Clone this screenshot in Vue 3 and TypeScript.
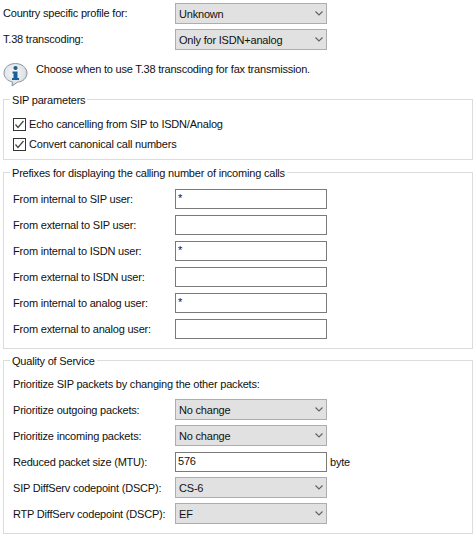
<script setup lang="ts">
interface Row {
  label: string,
  kind: 'select' | 'input',
  value: string,
  unit?: string
}

const topRows: Row[] = [
  { label: 'Country specific profile for:', kind: 'select', value: 'Unknown' },
  { label: 'T.38 transcoding:', kind: 'select', value: 'Only for ISDN+analog' }
]

const prefixRows: Row[] = [
  { label: 'From internal to SIP user:', kind: 'input', value: '*' },
  { label: 'From external to SIP user:', kind: 'input', value: '' },
  { label: 'From internal to ISDN user:', kind: 'input', value: '*' },
  { label: 'From external to ISDN user:', kind: 'input', value: '' },
  { label: 'From internal to analog user:', kind: 'input', value: '*' },
  { label: 'From external to analog user:', kind: 'input', value: '' }
]

const qosRows: Row[] = [
  { label: 'Prioritize outgoing packets:', kind: 'select', value: 'No change' },
  { label: 'Prioritize incoming packets:', kind: 'select', value: 'No change' },
  { label: 'Reduced packet size (MTU):', kind: 'input', value: '576', unit: 'byte' },
  { label: 'SIP DiffServ codepoint (DSCP):', kind: 'select', value: 'CS-6' },
  { label: 'RTP DiffServ codepoint (DSCP):', kind: 'select', value: 'EF' }
]

const checks = ['Echo cancelling from SIP to ISDN/Analog', 'Convert canonical call numbers']
const groups = [
  { title: 'Prefixes for displaying the calling number of incoming calls', rows: prefixRows, intro: '' },
  { title: 'Quality of Service', rows: qosRows, intro: 'Prioritize SIP packets by changing the other packets:' }
]
</script>

<template>
  <div class="page">
    <div class="top">
      <div v-for="row in topRows" :key="row.label" class="row top-row">
        <span class="label">{{ row.label }}</span>
        <div class="select">
          <span>{{ row.value }}</span>
          <svg width="8" height="5" viewBox="0 0 8 5"><path d="M0.5 0.5 4 4 7.5 0.5" fill="none" stroke="#606060" stroke-width="1.1" /></svg>
        </div>
      </div>
    </div>

    <div class="info">
      <svg width="25" height="25" viewBox="0 0 25 25">
        <defs>
          <radialGradient id="bubble" cx="0.45" cy="0.4" r="0.65">
            <stop offset="0" stop-color="#f6f8fa" />
            <stop offset="0.7" stop-color="#dfe3e7" />
            <stop offset="1" stop-color="#aeb6bd" />
          </radialGradient>
        </defs>
        <path d="M12.500 1.500C6 1.500 1 5.500 1 11c0 4.500 3.500 8 8.500 9L9 24l5.500-3.800c5.500-.5 9.500-4.200 9.500-9.200S19 1.500 12.500 1.500Z" fill="url(#bubble)" stroke="#8e979f" />
        <circle cx="12.500" cy="6" r="2.100" fill="#1c5f96" />
        <path d="M9.500 9.500h5V16H16v2H9v-2h1.500v-4.500h-1Z" fill="#1c5f96" />
      </svg>
      <span>Choose when to use T.38 transcoding for fax transmission.</span>
    </div>

    <fieldset class="group sip">
      <legend><span>SIP parameters</span></legend>
      <div v-for="text in checks" :key="text" class="check">
        <svg width="13" height="13" viewBox="0 0 13 13">
          <rect x="0.500" y="0.500" width="12" height="12" fill="#fff" stroke="#333" />
          <path d="M2.500 6.500 5 9.500 10.500 3" fill="none" stroke="#444" stroke-width="1.200" />
        </svg>
        <span>{{ text }}</span>
      </div>
    </fieldset>

    <fieldset v-for="group in groups" :key="group.title" class="group">
      <legend><span>{{ group.title }}</span></legend>
      <div v-if="group.intro" class="intro">{{ group.intro }}</div>
      <div v-for="row in group.rows" :key="row.label" class="row">
        <span class="label">{{ row.label }}</span>
        <div v-if="row.kind === 'select'" class="select">
          <span>{{ row.value }}</span>
          <svg width="8" height="5" viewBox="0 0 8 5"><path d="M0.5 0.5 4 4 7.5 0.5" fill="none" stroke="#606060" stroke-width="1.1" /></svg>
        </div>
        <div v-else class="input">{{ row.value }}</div>
        <span v-if="row.unit" class="unit">{{ row.unit }}</span>
      </div>
    </fieldset>
  </div>
</template>

<style>
body {
  background: #fff;
}
</style>

<style scoped>
.page {
  width: 476px;
  height: 538px;
  padding: 3px 3px 0;
  box-sizing: border-box;
  font-family: "Liberation Sans", Arial, sans-serif;
  font-size: 11px;
  letter-spacing: -0.2px;
  color: #111;
  overflow: hidden;
}

.top {
  display: flex;
  flex-direction: column;
  gap: 5px;
}

.row {
  display: flex;
  align-items: center;
  height: 21px;
  margin-bottom: 5px;
}

.top-row {
  margin-bottom: 0;
}

.label {
  width: 162px;
  flex: none;
  white-space: nowrap;
}

.top-row .label {
  width: 172px;
  margin-top: -2px;
}

.select {
  width: 152px;
  height: 21px;
  box-sizing: border-box;
  flex: none;
  display: flex;
  align-items: center;
  justify-content: space-between;
  padding: 0 3px;
  background: #e1e1e1;
  border: 1px solid #adadad;
}

.input {
  width: 152px;
  height: 20px;
  box-sizing: border-box;
  flex: none;
  padding: 0 2px;
  line-height: 16px;
  background: #fff;
  border: 1px solid #7a7a7a;
}

.unit {
  margin-left: 3px;
}

.info {
  display: flex;
  align-items: flex-start;
  gap: 8px;
  height: 27px;
  margin-top: 12px;
  margin-bottom: 2px;
}

.info span {
  margin-top: 1px;
}

.group {
  width: 470px;
  box-sizing: border-box;
  margin: 0 0 3px;
  padding: 8px 9px 4px;
  border: 1px solid #dcdcdc;
}

.group legend {
  padding: 0 2px;
  margin-left: -3px;
  line-height: 16px;
}

.group legend span {
  position: relative;
  top: 1px;
}

.sip {
  height: 69px;
  margin-bottom: 4px;
  padding-top: 7px;
}

.check {
  display: flex;
  align-items: center;
  gap: 3px;
  height: 20px;
}

.intro {
  height: 23px;
  line-height: 16px;
}
</style>
